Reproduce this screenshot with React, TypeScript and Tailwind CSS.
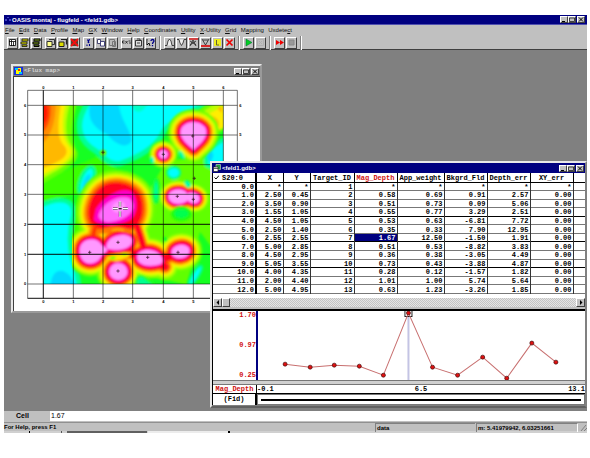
import React from "react";

const SANS = "font-['Liberation_Sans',sans-serif]";
const MONO = "font-['Liberation_Mono',monospace]";
const RAISED = "border border-t-white border-l-white border-r-[#404040] border-b-[#404040] bg-[#c0c0c0]";

/* ---------- window furniture ---------- */

function CaptionButtons() {
  const box = `flex h-[7px] w-2 items-center justify-center ${RAISED}`;
  return (
    <div className="flex items-center">
      <button aria-label="Minimize" className={box}>
        <svg viewBox="0 0 6 5" className="h-[5px] w-[6px]"><path d="M1 4.5h3" stroke="#000" /></svg>
      </button>
      <button aria-label="Maximize" className={box}>
        <svg viewBox="0 0 6 5" className="h-[5px] w-[6px]"><path d="M.5 1h5v3.5h-5z" fill="none" stroke="#222" strokeWidth=".8" /></svg>
      </button>
      <button aria-label="Close" className={`ml-px ${box}`}>
        <svg viewBox="0 0 6 5" className="h-[5px] w-[6px]"><path d="M1 .5l4 4M5 .5l-4 4" stroke="#000" /></svg>
      </button>
    </div>
  );
}

/* ---------- menu and toolbar ---------- */

const menus: [string, string, string][] = [
  ["", "F", "ile"], ["", "E", "dit"], ["", "D", "ata"], ["", "P", "rofile"], ["", "M", "ap"],
  ["", "G", "X"], ["", "W", "indow"], ["", "H", "elp"], ["", "C", "oordinates"], ["", "U", "tility"],
  ["", "X", "-Utility"], ["", "G", "rid"], ["M", "a", "pping"], ["Uxdete", "c", "t"],
];

const icons: Record<string, React.ReactNode> = {
  "New database": <path d="M1.5 1.5h6v6h-6zM1 3.5h7M3.5 2v6M5.5 4v4" fill="#fff" stroke="#000" strokeWidth=".8" />,
  "Open database": <path d="M2 1h6v2H2zM1 4h6v2H1zM2 7h5v1.5H2z" fill="#dd0" stroke="#111" strokeWidth=".8" />,
  "Save database": <path d="M2 1h6v2H2zM1 4h6v2H1zM2 7h5v1.5H2z" fill="#8a2" stroke="#000" />,
  "New map": <><path d="M1 3.5h5v5H1z" fill="#ff8" stroke="#333" /><path d="M3 1.5h5.5v5H6" fill="none" stroke="#333" /></>,
  "Open map": <><path d="M1 4h5v4.500H1z" fill="#dd0" stroke="#222" /><path d="M3 1.500h5.500v5" fill="none" stroke="#222" strokeWidth="1.200" /></>,
  "Delete map": <><path d="M1 1h7v7H1z" fill="#543" /><path d="M1 1l7 7M8 1L1 8" stroke="#f01010" strokeWidth="1.900" /></>,
  Cut: <path d="M5.500 1L4 5M3.500 1.500L5 5M3 6.500v1.500M5.500 6v2" stroke="#008" fill="none" strokeWidth="1.100" />,
  Copy: <><path d="M1.500 1.500h3v4h-3z" fill="#fff" stroke="#225" strokeWidth=".8" /><path d="M4.500 3.500h4v4.500h-4z" fill="#fff" stroke="#226" strokeWidth=".8" /></>,
  Paste: <path d="M1.500 1.500h5v6h-5zM4.500 3.500h3v5h-3z" fill="#bbb" stroke="#777" />,
  Execute: <path d="M.5 3h2M.5 5h2M.5 3v2M3.500 3l2 2.500M5.500 3l-2 2.500M6.500 3h2M7 5h2" stroke="#111" strokeWidth=".8" />,
  Script: <path d="M1.500 2.500h6v5.500h-6zM3 1h3v2M3 5h3" fill="#ddd" stroke="#111" strokeWidth=".8" />,
  "Context help": <><path d="M1 1v6l2-2 1 3" stroke="#000" fill="#fff" strokeWidth=".9" /><path d="M5 3c0-2 3-2 3 0 0 1-1.500 1-1.500 3M6.500 7v1.200" stroke="#008" fill="none" strokeWidth="1.300" /></>,
  "Profile up": <path d="M0 7.500h2L3 3l1.500-2L6 3l1 4.500h2" stroke="#222" fill="#eee" strokeWidth=".8" />,
  "Profile down": <path d="M0 1.500h2L3 5l1.500 2.500L6 5l1-3.500h2" stroke="#222" fill="#eee" strokeWidth=".8" />,
  "Profile top": <><path d="M0 1h9" stroke="#d00" strokeWidth="1.300" /><path d="M1 8l3-6 3 6M1 3l6 4M7 3L1 7" stroke="#222" fill="none" strokeWidth=".8" /></>,
  "Profile bottom": <><path d="M0 8h9" stroke="#d00" strokeWidth="1.600" /><path d="M1 1l3.500 6L8 1M2 2h5" stroke="#222" fill="none" strokeWidth=".8" /></>,
  Legend: <><path d="M1 1h7v7H1z" fill="#ee2" /><path d="M3.500 2v5H6" stroke="#663" fill="none" /></>,
  "Clear profile": <path d="M1.500 1.500l6 6M7.500 1.500l-6 6" stroke="#e00" strokeWidth="1.700" />,
  "Start script": <path d="M2 1l6 3.500L2 8z" fill="#0c2" stroke="#063" strokeWidth=".5" />,
  "Pause script": <path d="M1.500 1.500h6v6h-6zM3 3l3 3M6 3L3 6" fill="none" stroke="#b0b0b0" />,
  Record: <path d="M1 2l4 2.500L1 7zM5 2l4 2.500L5 7z" fill="#e00" />,
  Stop: <path d="M2 2h5v5H2z" fill="#999" stroke="#888" />,
};

function Tool({ name }: { name: string }) {
  return (
    <button aria-label={name} className={`flex h-3 w-[11px] items-center justify-center ${RAISED}`}>
      <svg viewBox="0 0 9 9" className="size-[9px]">{icons[name]}</svg>
    </button>
  );
}

function ToolGroup({ names }: { names: string[] }) {
  return <div className="flex gap-px">{names.map((n) => <Tool key={n} name={n} />)}</div>;
}

function Divider() {
  return <div className="h-[14px] w-[2px] border-l border-r border-l-[#808080] border-r-white" />;
}

/* ---------- flux map ---------- */

const bigBlob = "M255 302C290 287 340 300 358 330C372 370 366 410 340 425C300 440 238 438 214 412C198 380 215 322 255 302Z";
const lobes: { d: string; small?: boolean }[] = [
  { d: "M485 130C500 106 540 106 556 130C566 160 536 178 521 194C505 178 474 160 485 130Z" },
  { d: "M417 208a13 12 0 1 0 26 0a13 12 0 1 0-26 0Z", small: true },
  { d: "M446 334C448 308 494 308 501 327C515 317 541 327 538 343C534 360 512 356 503 346C486 362 446 360 446 334Z", small: true },
  { d: "M180 500C176 460 230 452 244 480C254 488 262 490 262 494C256 505 246 505 240 520C220 546 180 538 180 500Z" },
  { d: "M260 481C266 446 330 440 336 465C338 494 286 500 260 490Z" },
  { d: "M268 560a27 25 0 1 0 54 0a27 25 0 1 0-54 0Z" },
  { d: "M352 515C354 492 396 488 416 506C430 518 430 532 420 538C386 548 350 540 352 515Z" },
  { d: "M455 503C455 476 505 472 508 495C512 522 460 530 455 503Z" },
];

/* colour, growth round the lobes, growth round the main anomaly, links between lobes */
const halos: [string, number, number, number][] = [
  ["#6cff00", 78, 82, 82],
  ["#a8ff00", 66, 66, 70],
  ["#e0ff00", 56, 54, 58],
  ["#ffe600", 48, 45, 50],
  ["#ffb400", 40, 36, 42],
  ["#ff7800", 33, 25, 34],
  ["#ff3c00", 28, 12, 28],
  ["#ff0020", 22, 2, 20],
];

const xLines = [115, 205, 294, 383, 475, 565, 655];
const yLines = [136, 225, 314, 403, 493, 583, 672];
const targets = [
  [563, 228], [475, 283], [568, 355], [517, 409], [565, 418], [254, 577],
  [339, 547], [339, 633], [428, 592], [519, 577], [294, 277],
];

function FluxField() {
  return (
    <g transform="translate(45 75)">
      <rect x="70" y="61" width="540" height="536" fill="#16ff22" />
      <g filter="url(#soften)">
        {/* lime plateaus */}
        <path d="M380 330L440 225L620 215V500L600 520L540 440L500 600L340 560Z" fill="#60ff00" />
        <path d="M60 290L230 215L290 250L200 320L60 350Z" fill="#3aff00" />
        <path d="M180 300L150 450L200 470L230 300Z" fill="#3aff00" />

        {/* lows */}
        <g strokeLinejoin="round">
          <path d="M205 50C165 110 172 155 212 188C250 210 262 242 300 236C340 222 400 195 425 150C440 110 500 100 560 50Z" fill="#00ffff" stroke="#00ff98" strokeWidth="16" />
          <path d="M212 50C198 100 220 130 262 148C285 180 325 195 335 165C330 130 300 105 295 50Z" fill="#00d8ff" />
          <path d="M332 52Q350 110 388 52Z" fill="#00ffc8" />
          <path d="M620 160C575 180 550 205 560 240L620 270Z" fill="#00ffff" stroke="#00ff98" strokeWidth="12" />
          <path d="M560 210q10-28 20 0q-4 22-14 20Z" fill="#00d8ff" />
          <path d="M60 362C120 335 165 340 160 390C146 440 148 490 160 530C175 570 178 610 178 610H60Z" fill="#00ffff" stroke="#00ff98" strokeWidth="14" />
          <path d="M90 610Q95 550 130 558Q160 572 166 610Z" fill="#00d8ff" />
          <ellipse cx="200" cy="286" rx="18" ry="42" transform="rotate(22 200 286)" fill="#00ffff" stroke="#00ff98" strokeWidth="10" />
          <ellipse cx="200" cy="290" rx="9" ry="24" transform="rotate(22 200 290)" fill="#00e0ff" />
        </g>

        {/* western high */}
        <path d="M60 50H172C155 120 150 165 172 200C180 235 130 260 60 300Z" fill="#6cff00" />
        <path d="M60 50H150C132 120 134 160 160 190C176 225 120 250 60 285Z" fill="#c0ff00" />
        <path d="M60 50H138C122 120 126 160 150 188C166 222 116 245 60 272Z" fill="#ffee00" />
        <path d="M60 50H124C112 120 110 160 134 184C156 216 110 235 60 252Z" fill="#ffb800" />
        <path d="M60 50H108C106 100 100 150 60 182Z" fill="#ff8c00" />
        <path d="M60 50H92C94 95 90 125 60 150Z" fill="#ff4a00" />
        <path d="M60 50H78C88 90 82 112 60 128Z" fill="#ff1400" />
      </g>

      <g filter="url(#soften)" strokeLinejoin="round" strokeLinecap="round">
        {/* ridge to the north-east corner */}
        <path d="M540 130L620 70" stroke="#6cff00" strokeWidth="92" />
        <path d="M545 125L625 75" stroke="#c0ff00" strokeWidth="72" />
        <path d="M545 130L630 85" stroke="#ffee00" strokeWidth="56" />
        <path d="M540 140L572 118" stroke="#ffb400" strokeWidth="50" />
        <path d="M592 70l14-6v20Z" fill="#ffb800" />
        {halos.map(([color, lobe, big, link]) => (
          <g key={color} fill={color} stroke={color}>
            <path d={bigBlob} strokeWidth={big} />
            <path d="M275 300L315 300" strokeWidth={big} />
            <path d="M350 420L375 500" fill="none" strokeWidth={link * 0.7} />
            <path d="M225 430L215 470" fill="none" strokeWidth={big} />
            <path d="M280 500L345 505M410 530L460 510M405 530L435 545" fill="none" strokeWidth={link} />
            {lobes.map((l) => <path key={l.d} d={l.d} strokeWidth={l.small ? lobe * 0.76 : lobe} />)}
          </g>
        ))}
        {/* saddles inside the southern cluster */}
        <path d="M235 442Q285 422 330 440" stroke="#ff7800" strokeWidth="12" fill="none" />
        <path d="M278 437Q295 430 310 436" stroke="#ffb400" strokeWidth="6" fill="none" />
        <path d="M262 518Q290 506 328 506Q325 520 290 526Z" fill="#ffe600" stroke="#ff9000" strokeWidth="12" />
        <path d="M262 520Q290 508 326 508Q322 518 288 524Z" fill="#ffe600" stroke="#ffe600" strokeWidth="5" />
        <path d="M268 520q10-9 20-3q-6 10-20 3ZM305 508q8-6 16-1q-6 7-16 1Z" fill="#30ff00" stroke="#a0ff00" strokeWidth="3" />

        <g fill="#ff00c8" stroke="#ff00c8">
          <path d="M228 372C252 335 300 308 330 318C355 335 355 385 330 404C290 424 238 424 222 404Z" />
          {lobes.map((l) => <path key={l.d} d={l.d} strokeWidth="8" />)}
        </g>
        <path d="M236 390C250 350 300 328 328 340C348 360 340 385 310 400C275 416 238 416 236 390Z" fill="#ff6cff" />
        <path d="M276 368C280 348 312 342 316 362C314 384 280 392 276 368Z" fill="#ff98ff" />
        <g fill="#ff98ff">{lobes.map((l) => <path key={l.d} d={l.d} />)}</g>

        {/* isolated lows between the anomalies */}
        <g fill="#00ffff" stroke="#00ff90" strokeWidth="7">
          <ellipse cx="461" cy="263" rx="19" ry="17" />
          <ellipse cx="503" cy="297" rx="5" ry="9" transform="rotate(-30 503 297)" />
          <ellipse cx="526" cy="572" rx="9" ry="34" transform="rotate(32 526 572)" />
        </g>
        <ellipse cx="408" cy="318" rx="8" ry="36" fill="#00ffa8" stroke="#10ff40" strokeWidth="8" />
        <ellipse cx="485" cy="210" rx="6" ry="13" transform="rotate(-25 485 210)" fill="#00ffa8" />
        <ellipse cx="396" cy="225" rx="6" ry="9" fill="#00ffc0" />
        <ellipse cx="484" cy="386" rx="26" ry="18" fill="#00ff50" stroke="#20ff10" strokeWidth="10" />
        <ellipse cx="436" cy="463" rx="7" ry="8" fill="#10ff20" />
        <path d="M348 604C345 572 362 565 378 580L410 604Z" fill="#00ff90" stroke="#20ff20" strokeWidth="8" />
        <ellipse cx="249" cy="203" rx="10" ry="9" fill="#70f000" />
      </g>
    </g>
  );
}

function FluxMap() {
  return (
    <svg viewBox="27 51 738 702" className="block w-full" role="img" aria-label="Flux map">
      <defs>
        <clipPath id="survey"><path d="M115 136H655V672H115Z" /></clipPath>
        <filter id="soften" x="-5%" y="-5%" width="110%" height="110%"><feGaussianBlur stdDeviation="2.4" /></filter>
      </defs>
      <g clipPath="url(#survey)"><FluxField /></g>
      <g fill="none" stroke="#000" strokeWidth="3" strokeOpacity=".55">
        <path d="M68 91H697V715H68Z" />
        {xLines.map((x) => <path key={x} d={`M${x} 91V715`} />)}
        {yLines.map((y) => <path key={y} d={`M68 ${y}H697`} />)}
      </g>
      <path d="M115 91V715M68 493H655M68 583H655M68 715H697" stroke="#000" strokeWidth="2" />
      <path d={targets.map(([x, y]) => `M${x - 5} ${y}h10M${x} ${y - 5}v10`).join("")} stroke="#301020" strokeWidth="2" />
      <path d="M345 425V440M345 454V470M324 446H338M354 446H368" stroke="#333" strokeWidth="7" />
      <path d="M345 424V441M345 453V471M323 446H339M353 446H369" stroke="#fff" strokeWidth="4" />
      <path d="M341 446h9" stroke="#222" strokeWidth="4" />
      <g fontSize="12" fontWeight="700" fontFamily="Liberation Sans, sans-serif" textAnchor="middle" fill="#000">
        {xLines.map((x, i) => <text key={x} x={x} y="87">{i}</text>)}
        {xLines.slice(0, 6).map((x, i) => <text key={x} x={x} y="730">{i}</text>)}
        {yLines.map((y, i) => <text key={y} x="60" y={y + 4}>{6 - i}</text>)}
        {yLines.slice(0, 2).map((y, i) => <text key={y} x="706" y={y + 4}>{6 - i}</text>)}
      </g>
    </svg>
  );
}

function MapWindow() {
  return (
    <section className="absolute left-[7px] top-[14px] w-[251px] border-2 border-t-[#e8e8e8] border-l-[#e8e8e8] border-r-[#9a9a9a] border-b-[#9a9a9a] bg-[#c0c0c0]">
      <div className="flex h-[10px] items-center bg-[#808080] pl-px pr-px">
        <svg viewBox="0 0 9 8" className="h-2 w-[9px]">
          <path d="M0 0h9v8H0z" fill="#1830e0" /><path d="M2 1h5v6H2z" fill="#ff0" /><path d="M1 1h3v2H1zM5 5h3v2H5z" fill="#0cf" /><path d="M4 2h2v2H4z" fill="#e30" />
        </svg>
        <h2 className={`ml-px flex-1 text-[6px] font-bold leading-[8px] text-[#d0d0d0] ${MONO}`}>&lt;Flux map&gt;</h2>
        <CaptionButtons />
      </div>
      <div className="border-l border-t border-[#404040] bg-white"><FluxMap /></div>
    </section>
  );
}

/* ---------- database window ---------- */

const columns = ["X", "Y", "Target_ID", "Mag_Depth", "App_weight", "Bkgrd_Fld", "Depth_err", "XY_err"];
const rows = [
  ["0.0", "*", "*", "1", "*", "*", "*", "*", "*"],
  ["1.0", "2.50", "0.45", "2", "0.58", "0.69", "0.91", "2.57", "0.00"],
  ["2.0", "3.50", "0.90", "3", "0.51", "0.73", "0.09", "5.06", "0.00"],
  ["3.0", "1.55", "1.05", "4", "0.55", "0.77", "3.29", "2.51", "0.00"],
  ["4.0", "4.50", "1.05", "5", "0.53", "0.63", "-6.81", "7.72", "0.00"],
  ["5.0", "2.50", "1.40", "6", "0.35", "0.33", "7.90", "12.95", "0.00"],
  ["6.0", "2.55", "2.55", "7", "1.67", "12.50", "-1.50", "1.91", "0.00"],
  ["7.0", "5.00", "2.85", "8", "0.51", "0.53", "-8.82", "3.83", "0.00"],
  ["8.0", "4.50", "2.95", "9", "0.36", "0.38", "-3.05", "4.49", "0.00"],
  ["9.0", "5.05", "3.55", "10", "0.73", "0.43", "-3.88", "4.87", "0.00"],
  ["10.0", "4.00", "4.35", "11", "0.28", "0.12", "-1.57", "1.82", "0.00"],
  ["11.0", "2.00", "4.40", "12", "1.01", "1.00", "5.74", "5.64", "0.00"],
  ["12.0", "5.00", "4.95", "13", "0.63", "1.23", "-3.26", "1.85", "0.00"],
];
const points = [
  [285, 364], [310, 367], [334, 365], [359, 366], [383, 375], [408, 313],
  [432, 367], [457, 375], [482, 357], [506, 378], [531, 343], [555, 362],
];

function DataTable() {
  return (
    <table className={`h-[121px] w-full table-fixed border-collapse text-[7px] font-bold leading-[6px] ${MONO}`}>
      <colgroup>
        <col className="w-[43px]" /><col className="w-[27px]" /><col className="w-[27px]" /><col className="w-[44px]" />
        <col className="w-[43px]" /><col className="w-[47px]" /><col className="w-[43px]" /><col className="w-[43px]" />
        <col className="w-[43px]" /><col />
      </colgroup>
      <thead>
        <tr className="h-[9px]">
          <th className="border-b border-r-2 border-black p-0 pt-px text-left">
            <span className="flex items-center gap-[3px]">
              <svg viewBox="0 0 5 5" className="ml-px size-[5px]"><path d="M.5 2.500L2 4l3-3.500" fill="none" stroke="#000" /></svg>
              S20:0
            </span>
          </th>
          {columns.map((c) => (
            <th key={c} className={`border-b border-r border-black p-0 pt-px text-center ${c === "Mag_Depth" ? "text-[#d01010]" : ""}`}>{c}</th>
          ))}
          <th className="border-b border-black p-0" />
        </tr>
      </thead>
      <tbody>
        {rows.map((r, ri) => (
          <tr key={r[0]} className={ri === 3 || ri === 6 || ri === 9 ? "border-b border-black" : "border-b border-[#777]"}>
            {r.map((v, i) => (
              <td
                key={i}
                className={`p-0 pr-px pt-px text-right ${i === 0 ? "border-r-2 border-black" : "border-r border-r-[#333]"} ${ri === 6 && i === 4 ? "bg-[#000080] text-white" : ""}`}
              >
                {v}
              </td>
            ))}
            <td className="p-0" />
          </tr>
        ))}
      </tbody>
    </table>
  );
}

function Scrollbar() {
  return (
    <div className="flex h-[9px] bg-[repeating-conic-gradient(#c4c4c4_0_25%,#e4e4e4_0_50%)] bg-[length:2px_2px]">
      <button aria-label="Scroll left" className={`flex w-[9px] items-center justify-center ${RAISED}`}>
        <svg viewBox="0 0 4 5" className="h-[5px] w-1"><path d="M3 0v5L.5 2.500z" /></svg>
      </button>
      <div className={`w-2 ${RAISED}`} />
      <div className="flex-1" />
      <button aria-label="Scroll right" className={`flex w-[9px] items-center justify-center ${RAISED}`}>
        <svg viewBox="0 0 4 5" className="h-[5px] w-1"><path d="M1 0v5l2.500-2.500z" /></svg>
      </button>
    </div>
  );
}

function ProfilePane() {
  return (
    <div className={`text-[7px] font-bold ${MONO}`}>
      <div className="flex border-t-2 border-black bg-white">
        <div className="flex w-[43px] flex-col justify-between pb-px text-right leading-[8px] text-[#d01010]">
          <span>1.70</span><span>0.97</span><span>0.25</span>
        </div>
        <div className="w-[2px] bg-[#000080]" />
        <svg viewBox="258 311 326 69" className="block min-w-0 flex-1" role="img" aria-label="Mag_Depth profile">
          <path d="M408 316V380" stroke="#c4c4e4" strokeWidth="2" />
          <path d="M404.500 311V316.500H411.500V311" fill="#fff" stroke="#222" />
          <polyline points={points.map((p) => p.join(",")).join(" ")} fill="none" stroke="#c87070" strokeWidth="1" />
          {points.map(([x, y]) => (
            <circle key={x} cx={x} cy={y} r="2" fill="#e01010" stroke="#401010" strokeWidth=".7" />
          ))}
        </svg>
      </div>
      <div className="h-[5px] border-y border-y-[#777] bg-[#d0d0d0]" />
      <div className="flex h-[9px] border-b border-black bg-white leading-[8px]">
        <div className="w-[44px] border-r border-black text-center text-[#d01010]">Mag_Depth</div>
        <div className="flex flex-1 justify-between"><span>-0.1</span><span>6.5</span><span>13.1</span></div>
      </div>
      <div className="flex h-[11px] bg-white leading-[10px]">
        <div className="w-[44px] border-r-2 border-black text-center">(Fid)</div>
        <div className="flex flex-1 items-center border border-[#777] px-[3px]"><div className="h-[2px] flex-1 bg-black" /></div>
      </div>
    </div>
  );
}

function DataWindow() {
  return (
    <section className="absolute left-[206px] right-0 top-[111px] border-2 border-t-[#e8e8e8] border-l-[#e8e8e8] border-r-[#808080] border-b-[#606060] bg-[#c0c0c0]">
      <div className="flex h-[10px] items-center bg-[#000080] pl-px pr-px">
        <svg viewBox="0 0 8 8" className="size-2">
          <path d="M3 .5h4.500v5H3z" fill="#294" stroke="#bcb" strokeWidth=".7" /><path d="M.5 3h4.500v4.500H.5z" fill="#fff" stroke="#222" strokeWidth=".7" /><path d="M.5 4.500H5" stroke="#222" strokeWidth=".7" />
        </svg>
        <h2 className={`ml-px flex-1 text-[6px] font-bold leading-[8px] text-white ${SANS}`}>&lt;feld1.gdb&gt;</h2>
        <CaptionButtons />
      </div>
      <div className="border-l border-black">
        <div className="bg-white pb-1"><DataTable /></div>
        <Scrollbar />
        <div className="h-[2px]" />
        <ProfilePane />
      </div>
      <div className="h-px bg-[#808080]" />
    </section>
  );
}

/* ---------- application frame ---------- */

export default function App() {
  return (
    <div className="bg-white pb-6 pl-1 pr-[3px] pt-[15px]">
      <main className={`bg-[#c0c0c0] text-[6px] text-black ${SANS}`}>
        <header className="flex h-[10px] items-center border-b border-[#5050b0] bg-[#000080] pr-[2px] text-white">
          <svg viewBox="0 0 6 6" className="ml-px size-[6px]"><path d="M0 3h2M4 3h2M3 0v1" stroke="#88f" /></svg>
          <h1 className="ml-px flex-1 font-bold leading-[8px]">OASIS montaj - flugfeld - &lt;feld1.gdb&gt;</h1>
          <CaptionButtons />
        </header>
        <nav className="flex h-[11px] w-[288px] items-center justify-between pl-px leading-[9px] text-[#111]">
          {menus.map(([a, b, c]) => (
            <button key={a + b + c}>{a}<span className="underline">{b}</span>{c}</button>
          ))}
        </nav>
        <div className="flex h-[14px] items-center gap-[3px] border-b border-[#404040] pl-[3px]">
          <ToolGroup names={["New database", "Open database", "Save database"]} />
          <ToolGroup names={["New map", "Open map", "Delete map"]} />
          <ToolGroup names={["Cut", "Copy", "Paste"]} />
          <ToolGroup names={["Execute", "Script", "Context help"]} />
          <Divider />
          <ToolGroup names={["Profile up", "Profile down", "Profile top", "Profile bottom", "Legend", "Clear profile"]} />
          <Divider />
          <ToolGroup names={["Start script", "Pause script"]} />
          <Divider />
          <ToolGroup names={["Record", "Stop"]} />
          <Divider />
        </div>
        <div className="relative h-[361px] bg-[#808080]">
          <MapWindow />
          <DataWindow />
        </div>
        <div className="flex h-[10px] text-[7px] leading-[10px]">
          <label htmlFor="cell" className="w-[46px] pl-3 font-bold">Cell</label>
          <input id="cell" defaultValue="1.67" className="min-w-0 flex-1 bg-white px-px outline-none" />
        </div>
        <footer className="mt-px flex h-[9px] items-center border-t border-[#909090] font-bold leading-[8px]">
          <span className="flex-1">For Help, press F1</span>
          <span className="w-[100px] border-l border-t border-[#808080] pl-px">data</span>
          <span className="ml-px w-[102px] border-l border-r border-t border-[#808080] border-r-white pl-px">m: 5.41979942, 6.03251661</span>
          <svg viewBox="0 0 9 8" className="h-2 w-[9px]"><path d="M3 8l5-6M6 8l3-3" stroke="#808080" /></svg>
        </footer>
        <div className="flex h-[2px] bg-[#d0d0d0]">
          <div className="w-[26px] border-r border-black" />
          <div className="w-8 border-r border-[#555]" />
          <div className="ml-[5px] w-20 bg-[#606060]" />
          <div className="ml-px w-[82px] border-r-2 border-black bg-[#ececec]" />
        </div>
      </main>
    </div>
  );
}
